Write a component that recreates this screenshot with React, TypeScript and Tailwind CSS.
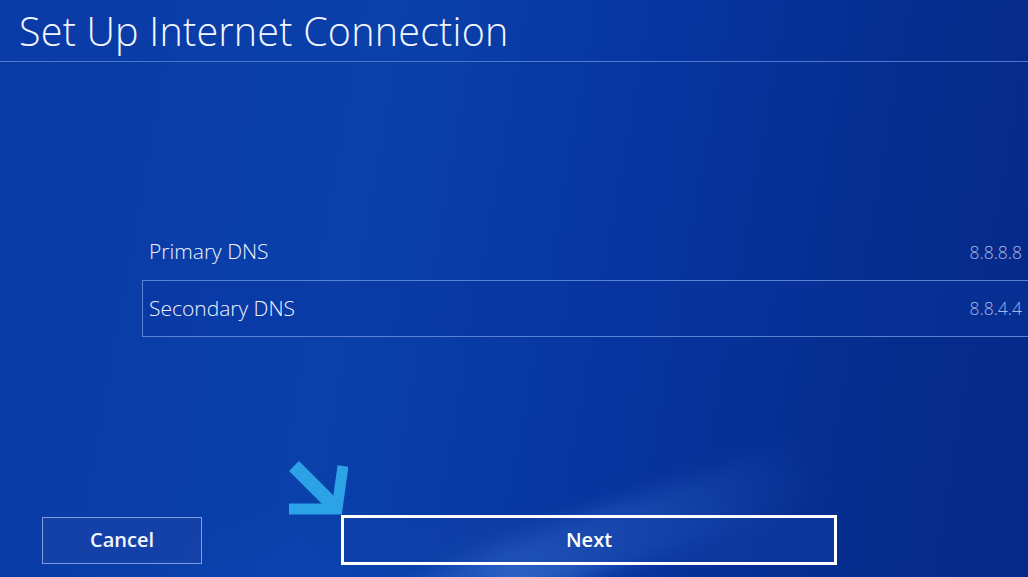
import React from "react";

function PointerArrow() {
  return (
    <svg
      className="absolute left-[282px] top-[456px]"
      width="66"
      height="64"
      viewBox="0 0 66 64"
      fill="none"
    >
      <path d="M12 10 L52 50" stroke="#2ba3e6" strokeWidth="14" strokeLinecap="butt" />
      <path d="M7 53 H55 L61 10" stroke="#2ba3e6" strokeWidth="11" strokeLinejoin="miter" />
    </svg>
  );
}

export default function App() {
  const rows = [
    { label: "Primary DNS", value: "8.8.8.8", selected: false },
    { label: "Secondary DNS", value: "8.8.4.4", selected: true },
  ];

  return (
    <div className="relative flex h-[577px] w-[1028px] flex-col overflow-hidden bg-[linear-gradient(100deg,#0a3aa6_0%,#0a40aa_35%,#0735a0_60%,#052c8c_85%,#06298a_100%)] font-['Open_Sans',sans-serif] text-white">
      {/* background light streak */}
      <div className="pointer-events-none absolute left-[370px] top-[512px] h-[60px] w-[460px] -rotate-[19deg] bg-[linear-gradient(90deg,transparent_0%,rgba(90,150,235,0.45)_30%,rgba(70,130,225,0.22)_65%,transparent_100%)] blur-[10px]" />
      <div className="pointer-events-none absolute left-[100px] top-[500px] h-[200px] w-[500px] rounded-[50%] bg-[radial-gradient(ellipse_at_center,rgba(20,80,200,0.25)_0%,transparent_70%)]" />

      <header className="relative flex h-[62px] items-start border-b border-[#4f78cc] pl-[19px] pt-[7px]">
        <h1 className="text-[39.5px] font-light leading-[48px] tracking-[0.2px] text-[#f2f6ff]">
          Set Up Internet Connection
        </h1>
      </header>

      <section className="relative mt-[162px] ml-[142px] flex flex-col">
        {rows.map((row) => (
          <div
            key={row.label}
            className={
              row.selected
                ? "flex h-[57px] items-center justify-between border border-r-0 border-[#5a82d2] bg-[#0a35a0]/40 pl-[6px] pr-[6px]"
                : "flex h-[56px] items-center justify-between border-l border-transparent pl-[6px] pr-[6px]"
            }
          >
            <span className="text-[21px] font-light text-[#eef3ff]">{row.label}</span>
            <span className="text-[17.5px] font-light text-[#a4b8e4]">{row.value}</span>
          </div>
        ))}
      </section>

      <div className="flex-1" />

      <footer className="relative flex items-center pb-[12px] pl-[42px]">
        <button className="h-[47px] w-[160px] border border-[#7d9ee0] bg-[#1843a8]/70 text-[20px] font-semibold text-[#f4f7ff]">
          Cancel
        </button>
        <button className="ml-[139px] h-[50px] w-[496px] border-[3px] border-white bg-[#1240a8]/50 text-[20px] font-semibold text-white">
          Next
        </button>
      </footer>

      <PointerArrow />
    </div>
  );
}
